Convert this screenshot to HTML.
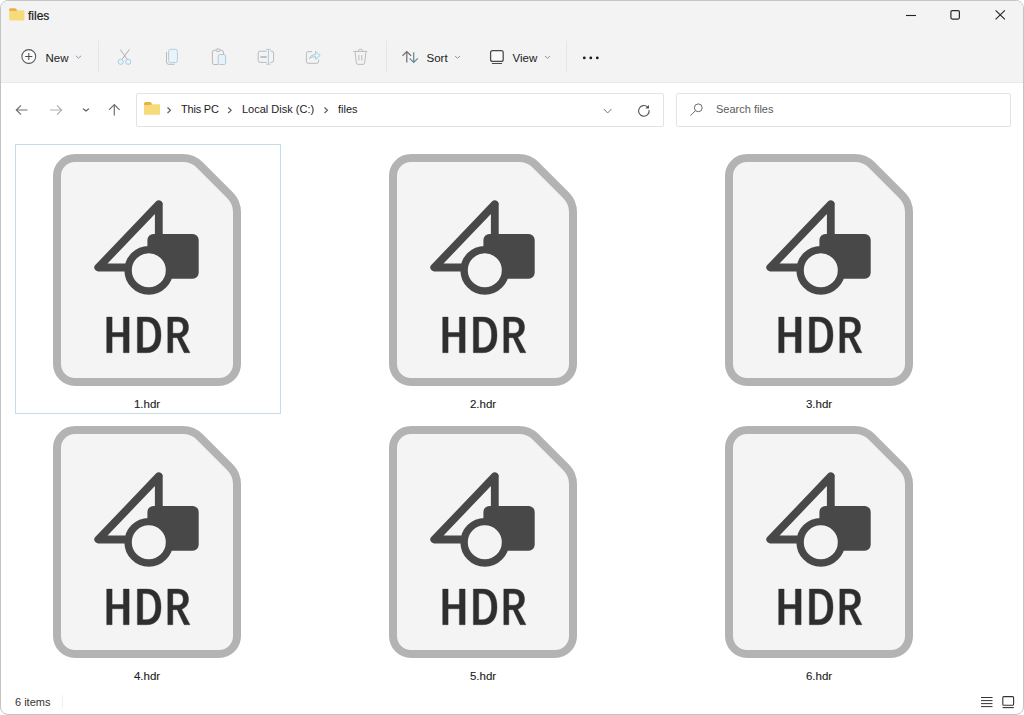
<!DOCTYPE html>
<html><head><meta charset="utf-8">
<style>
html,body{margin:0;padding:0;background:#fff;width:1024px;height:715px;overflow:hidden;}
body{font-family:"Liberation Sans",sans-serif;position:relative;}
#win{position:absolute;left:0;top:0;width:1022px;height:713px;border:1px solid #c3c3c3;border-radius:8px;overflow:hidden;background:#fff;}
#head{position:absolute;left:0;top:0;width:1022px;height:81px;background:#f3f3f3;border-bottom:1px solid #e9e9e9;}
.t{position:absolute;white-space:nowrap;color:#1b1b1b;font-size:11.5px;line-height:14px;}
.sep{position:absolute;width:1px;background:#e5e5e5;}
svg{position:absolute;overflow:visible;}
.box{position:absolute;border:1px solid #e3e3e3;border-radius:2px;background:#fff;}
.lbl{position:absolute;width:200px;text-align:center;font-size:11.5px;line-height:14px;color:#1e1e1e;-webkit-text-stroke:0.12px #1e1e1e;}
</style></head><body>
<div id="win">
  <div id="head"></div>
</div>

<div class="box" style="left:136px;top:93px;width:526px;height:32px;"></div>
<div class="box" style="left:676px;top:93px;width:333px;height:32px;"></div>
<!-- title -->
<svg style="left:0;top:0" width="1024" height="715" viewBox="0 0 1024 715">
  <!-- title folder -->
  <path d="M9.2 11.5 V9.5 Q9.2 8.2 10.5 8.2 H15 Q16.5 8.2 16.8 9.8 V11.5 Z" fill="#ebb13f"/>
  <path d="M9.2 11.2 H16.8 V10.2 H23.5 Q24.4 10.2 24.4 11.2 V19.6 Q24.4 20.6 23.5 20.6 H10.2 Q9.2 20.6 9.2 19.6 Z" fill="#f7da7a"/>
  <!-- window controls -->
  <line x1="906" y1="15.5" x2="916" y2="15.5" stroke="#222" stroke-width="1.1"/>
  <rect x="950.9" y="10.6" width="8.5" height="8.5" rx="1.5" fill="none" stroke="#2a2a2a" stroke-width="1.2"/>
  <path d="M995.6 10.4 L1004.9 19.3 M1004.9 10.4 L995.6 19.3" stroke="#222" stroke-width="1.1"/>
  <!-- new plus circle -->
  <circle cx="28.8" cy="56.5" r="6.9" fill="#fbfbfb" stroke="#555" stroke-width="1.05"/>
  <path d="M28.8 53 V60 M25.2 56.5 H32.3" stroke="#4a4a4a" stroke-width="1"/>
  <path d="M76 55.8 L78.5 58.2 L81 55.8" fill="none" stroke="#888" stroke-width="0.9"/>
  <!-- cut -->
  <path d="M120.2 49.4 L127 59 M129.4 49.4 L122.3 59" stroke="#a4a4a4" stroke-width="0.9"/>
  <circle cx="120.7" cy="61.8" r="2.6" fill="#e0f5fc" stroke="#a9c6d2" stroke-width="0.9"/>
  <circle cx="128.2" cy="61.8" r="2.6" fill="#e0f5fc" stroke="#a9c6d2" stroke-width="0.9"/>
  <!-- copy -->
  <path d="M166.5 52 V62 Q166.5 64.3 168.8 64.3 H174.5" fill="none" stroke="#b3b3b3" stroke-width="0.9"/>
  <rect x="168.6" y="49.3" width="8.8" height="13.3" rx="2" fill="#e8f4fb" stroke="#afc9d6" stroke-width="0.9"/>
  <!-- paste -->
  <path d="M215.8 50.3 H214.2 Q212.4 50.3 212.4 52.1 V62.7 Q212.4 64.5 214.2 64.5 H218 M220.2 50.3 H221.6 Q223.4 50.3 223.4 52.1 V54.3" fill="none" stroke="#b0b0b0" stroke-width="0.9"/>
  <rect x="216" y="49" width="4" height="2.4" rx="1" fill="#f3f3f3" stroke="#b0b0b0" stroke-width="0.9"/>
  <rect x="218.2" y="54.5" width="7.4" height="10" rx="1.5" fill="#e6f4fa" stroke="#a9c5cf" stroke-width="0.9"/>
  <!-- rename -->
  <path d="M266.5 51.2 H260.2 Q258.2 51.2 258.2 53.2 V60.4 Q258.2 62.4 260.2 62.4 H266.5 M270.3 51.2 H271.6 Q273.6 51.2 273.6 53.2 V60.4 Q273.6 62.4 271.6 62.4 H270.3" fill="none" stroke="#b3b3b3" stroke-width="0.9"/>
  <path d="M268.4 49.4 V64.2 M266.2 49.4 H270.6 M266.2 64.2 H270.6" stroke="#a3c6d8" stroke-width="0.9"/>
  <rect x="260.4" y="56.2" width="6.3" height="1.6" fill="#9fbccb"/>
  <!-- share -->
  <path d="M312 51.6 H308.2 Q306.4 51.6 306.4 53.4 V61.5 Q306.4 63.3 308.2 63.3 H316.8 Q318.6 63.3 318.6 61.5 V59.5" fill="none" stroke="#b3b3b3" stroke-width="0.9"/>
  <path d="M309.2 58.6 Q310.5 54.6 315.6 54.4 V51.4 L320.2 55.4 L315.6 59.2 V56.6 Q311.6 56.6 309.2 58.6 Z" fill="#e3f5fb" stroke="#a6c6d4" stroke-width="0.9" stroke-linejoin="round"/>
  <!-- delete -->
  <path d="M353.3 51.4 H367.3 M358.6 51.4 V50.4 Q358.6 49.3 359.7 49.3 H361.4 Q362.5 49.3 362.5 50.4 V51.4 M355 51.4 L356.3 62.8 Q356.5 64.4 358.1 64.4 H362.9 Q364.5 64.4 364.7 62.8 L366 51.4 M358.9 55 V60.6 M361.8 55 V60.6" fill="none" stroke="#b5b5b5" stroke-width="0.9"/>
  <!-- sort -->
  <path d="M406.8 51.8 V62.5 M402.5 55.8 L406.8 51.6 L411.1 55.8" fill="none" stroke="#727272" stroke-width="1.25"/>
  <path d="M413.7 52.2 V62.5 M409.6 58.4 L413.7 62.4 L417.8 58.4" fill="none" stroke="#6a8797" stroke-width="1.25"/>
  <path d="M455 56 L457.5 58.3 L460 56" fill="none" stroke="#888" stroke-width="0.9"/>
  <!-- view -->
  <rect x="490.6" y="50.6" width="12.6" height="10.8" rx="2" fill="#f9f9f9" stroke="#4a4a4a" stroke-width="1.25"/>
  <line x1="492.4" y1="63.5" x2="501.6" y2="63.5" stroke="#4a4a4a" stroke-width="1.2" stroke-linecap="round"/>
  <path d="M545 56 L547.5 58.3 L550 56" fill="none" stroke="#888" stroke-width="0.9"/>
  <!-- more -->
  <circle cx="584.3" cy="57.9" r="1.4" fill="#1b1b1b"/>
  <circle cx="590.8" cy="57.9" r="1.4" fill="#1b1b1b"/>
  <circle cx="597.3" cy="57.9" r="1.4" fill="#1b1b1b"/>
  <!-- nav arrows -->
  <path d="M16.5 110 H27.5 M21 105.3 L16.3 110 L21 114.7" fill="none" stroke="#707070" stroke-width="1.2"/>
  <path d="M50 110 H61.5 M57 105.3 L61.7 110 L57 114.7" fill="none" stroke="#b0b0b0" stroke-width="1.2"/>
  <path d="M83 108.6 L86 111 L89 108.6" fill="none" stroke="#555" stroke-width="1.2"/>
  <path d="M114.3 104.5 V115.5 M109 109.8 L114.3 104.5 L119.6 109.8" fill="none" stroke="#707070" stroke-width="1.2"/>
  <!-- address folder -->
  <path d="M144 105.5 V103.5 Q144 102 145.5 102 H150 Q151.5 102 151.8 103.8 V105.5 Z" fill="#ebb13f"/>
  <path d="M144 105.2 H151.8 V104.2 H159 Q160 104.2 160 105.2 V113.8 Q160 114.8 159 114.8 H145 Q144 114.8 144 113.8 Z" fill="#f7da7a"/>
  <path d="M167.5 107.5 L170.5 110.3 L167.5 113" fill="none" stroke="#555" stroke-width="1.1"/>
  <path d="M228.2 107.5 L231.2 110.3 L228.2 113" fill="none" stroke="#555" stroke-width="1.1"/>
  <path d="M324.5 107.5 L327.5 110.3 L324.5 113" fill="none" stroke="#555" stroke-width="1.1"/>
  <path d="M603.8 109 L607.6 113 L611.4 109" fill="none" stroke="#777" stroke-width="1"/>
  <path d="M649.1 110 A5.3 5.3 0 1 1 647.65 107.15" fill="none" stroke="#555" stroke-width="1.1"/><path d="M645.2 108.6 L649 104.9 V108.6 Z" fill="#555"/>
  <!-- search icon -->
  <circle cx="698.3" cy="107.8" r="3.9" fill="none" stroke="#6a6a6a" stroke-width="1"/>
  <line x1="695.5" y1="110.6" x2="690.6" y2="115.6" stroke="#6a6a6a" stroke-width="1"/>
  <!-- status icons -->
  <path d="M981 697.5 H992.5 M981 700.6 H992.5 M981 703.6 H992.5 M981 706.6 H992.5" stroke="#333" stroke-width="1"/>
  <rect x="1002.8" y="696.6" width="10.8" height="8.6" rx="1" fill="none" stroke="#333" stroke-width="1.1"/>
  <line x1="1002.6" y1="707.6" x2="1013.8" y2="707.6" stroke="#333" stroke-width="1.1"/>
</svg>

<div class="t" style="left:28px;top:9px;font-size:12px;-webkit-text-stroke:0.2px #1b1b1b;">files</div>
<div class="t" style="left:45.5px;top:50.5px;">New</div>
<div class="sep" style="left:98px;top:41px;height:31px;"></div>
<div class="sep" style="left:386px;top:41px;height:31px;"></div>
<div class="sep" style="left:566px;top:41px;height:31px;"></div>
<div class="t" style="left:426.5px;top:50.5px;">Sort</div>
<div class="t" style="left:512.5px;top:50.5px;">View</div>

<div class="t" style="left:181px;top:102px;font-size:11px;letter-spacing:-0.2px;">This PC</div>
<div class="t" style="left:242px;top:102px;font-size:11px;">Local Disk (C:)</div>
<div class="t" style="left:338px;top:102px;font-size:11px;">files</div>
<div class="t" style="left:716px;top:102px;font-size:11px;color:#5c5c5c;">Search files</div>

<div style="position:absolute;left:15px;top:144px;width:264px;height:268px;border:1px solid #c4dee9;"></div>

<svg style="left:0;top:0" width="1024" height="715" viewBox="0 0 1024 715">
  <defs>
    <g id="ic">
      <path d="M4 22 A18 18 0 0 1 22 4 L129.8 4 Q139.8 4 146.9 11.1 L176.9 41.1 Q184 48.2 184 58.2 L184 210 A18 18 0 0 1 166 228 L22 228 A18 18 0 0 1 4 210 Z" fill="#f4f4f4" stroke="#b3b3b3" stroke-width="8"/>
      <path d="M105.8 50.3 V81 M105.8 50.3 L45.3 113.5 H72" fill="none" stroke="#484848" stroke-width="7.8" stroke-linejoin="round" stroke-linecap="round"/>
      <rect x="94.4" y="80" width="51.3" height="44.8" rx="6" fill="#484848"/>
      <circle cx="95.8" cy="116.3" r="20.7" fill="#f4f4f4" stroke="#484848" stroke-width="7.4"/>
      <path fill="#2e2e2e" stroke="#2e2e2e" stroke-width="0.4" fill-rule="evenodd" d="M53.7 163.1 h5.4 v15.4 h11.3 v-15.4 h5.7 v35.6 h-5.7 v-15.9 h-11.3 v15.9 h-5.4 z
        M84.4 163.1 H94 C103.5 163.1 108 170 108 180.9 C108 191.8 103.5 198.7 94 198.7 H84.4 Z
        M89.7 167.6 V193.7 H93 C99.8 193.7 102.6 188.8 102.6 180.7 C102.6 172.6 99.8 167.6 93 167.6 Z
        M114.8 163.1 H124.5 C131.5 163.1 135.5 166.8 135.5 173.3 C135.5 178.4 132.7 182 128.7 183.2 L137 198.7 H131.2 L124.2 183.7 H119.8 V198.7 H114.8 Z
        M119.8 167.6 V179.3 H124.5 C128.3 179.3 130.2 177.1 130.2 173.4 C130.2 169.7 128.3 167.6 124.5 167.6 Z"/>
    </g>
  </defs>
  <use href="#ic" x="53" y="154"/>
  <use href="#ic" x="389" y="154"/>
  <use href="#ic" x="725" y="154"/>
  <use href="#ic" x="53" y="426"/>
  <use href="#ic" x="389" y="426"/>
  <use href="#ic" x="725" y="426"/>
</svg>

<div class="lbl" style="left:47px;top:397px;">1.hdr</div>
<div class="lbl" style="left:383px;top:397px;">2.hdr</div>
<div class="lbl" style="left:719px;top:397px;">3.hdr</div>
<div class="lbl" style="left:47px;top:669px;">4.hdr</div>
<div class="lbl" style="left:383px;top:669px;">5.hdr</div>
<div class="lbl" style="left:719px;top:669px;">6.hdr</div>

<div class="t" style="left:15px;top:695px;font-size:11px;color:#333;">6 items</div>
<div class="sep" style="left:62px;top:695px;height:13px;background:#f0f0f0;"></div>
</body></html>
